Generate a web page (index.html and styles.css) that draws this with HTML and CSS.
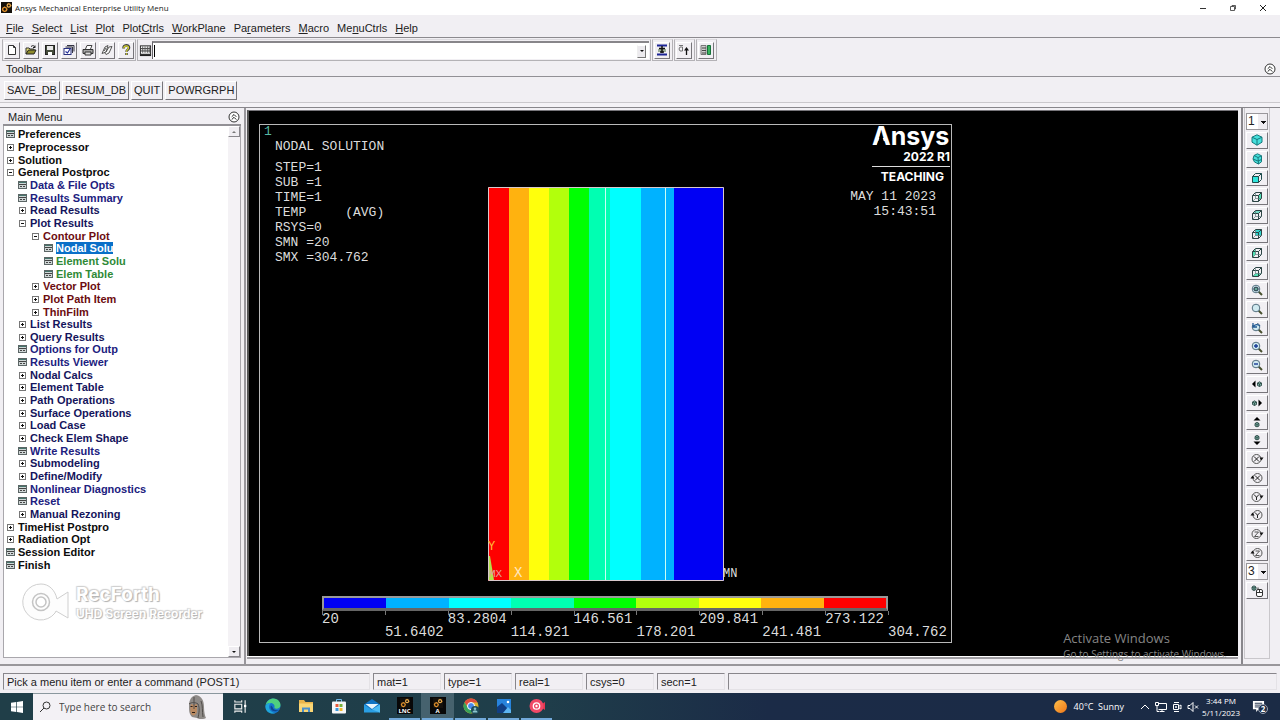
FILE: index.html
```html
<!DOCTYPE html>
<html lang="en">
<head>
<meta charset="utf-8">
<title>Ansys Mechanical Enterprise Utility Menu</title>
<link rel="stylesheet" href="styles.css">
</head>
<body>
<svg class="defs" aria-hidden="true">
  <symbol id="gears" viewBox="0 0 12 12"><rect width="12" height="12" fill="#15110c"/><circle cx="4" cy="8" r="2.2" fill="none" stroke="#e0902c" stroke-width="1.5"/><circle cx="8.5" cy="3.8" r="1.8" fill="none" stroke="#f0b050" stroke-width="1.4"/><path d="M4 5v1M4 10v1M1 8h1M6 8h1M8.500 1v1M10.500 4h1" stroke="#e0902c"/></symbol>
  <symbol id="form" viewBox="0 0 9 8"><rect x=".5" y=".5" width="8" height="7" fill="#cfd6d6" stroke="#5c6666"/><rect x="1" y="1" width="7" height="1" fill="#47756c"/><path d="M1 3.500h7M2 5.500h2M5 5.500h2" stroke="#444"/></symbol>
  <symbol id="plus" viewBox="0 0 9 8"><rect x="1.500" y="1.500" width="6" height="6" fill="#fff" stroke="#777"/><path d="M3 4.500h3M4.500 3v3" stroke="#111"/></symbol>
  <symbol id="minus" viewBox="0 0 9 8"><rect x="1.500" y="1.500" width="6" height="6" fill="#fff" stroke="#777"/><path d="M3 4.500h3" stroke="#111"/></symbol>
  <symbol id="collapse" viewBox="0 0 12 12"><circle cx="6" cy="6" r="5" fill="#fff" stroke="#333"/><path d="M3.700 5.800 6 3.500l2.300 2.300M3.700 8.600 6 6.300l2.300 2.300" fill="none" stroke="#222"/></symbol>
  <symbol id="wire" viewBox="0 0 12 12"><path d="M1.500 4.500h6v6h-6zM1.500 4.500l3-3h6v6l-3 3M7.500 4.500l3-3" fill="none" stroke="#2c4444"/><path d="M4.500 1.500v6h6M4.500 7.500l-3 3" fill="none" stroke="#5d7a78" stroke-width=".7"/></symbol>
  <symbol id="box" viewBox="0 0 12 12"><path d="M1.500 4.500h6v6h-6zM1.500 4.500l3-3h6v6l-3 3M7.500 4.500l3-3" fill="none" stroke="#1d4c4c"/></symbol>
  <symbol id="lens" viewBox="0 0 12 12"><path d="M7.500 7.500 11 11" stroke="#48502e" stroke-width="2"/><circle cx="5" cy="5" r="3.800" fill="#cfe9f0" stroke="#557080"/></symbol>
  <symbol id="rotR" viewBox="0 0 14 12"><circle cx="6.500" cy="6" r="4.500" fill="none" stroke="#555"/><path d="M9.500 4.500h4l-2 3z" fill="#111"/></symbol>
  <symbol id="rotL" viewBox="0 0 14 12"><circle cx="7.500" cy="6" r="4.500" fill="none" stroke="#555"/><path d="M.5 6.500h4l-2-3z" fill="#111"/></symbol>
  <symbol id="dot" viewBox="0 0 6 6"><path d="M1 2l2-1.200L5 2v2.500L3 5.500 1 4.500z" fill="#7fb0a4" stroke="#1d3b38" stroke-width=".8"/><path d="M1 2l2 1 2-1M3 3v2.500" stroke="#1d3b38" stroke-width=".7" fill="none"/></symbol>
</svg>

<header class="titlebar">
  <svg class="app-icon"><use href="#gears"/></svg>
  <h1>Ansys Mechanical Enterprise Utility Menu</h1>
  <div class="window-buttons">
    <button aria-label="Minimize"><svg viewBox="0 0 8 8"><path d="M1 4.500h6" stroke="#333"/></svg></button>
    <button aria-label="Restore"><svg viewBox="0 0 8 8"><path d="M1.500 2.500h4v4h-4zM3 2.500v-1h3.500V5h-1" fill="none" stroke="#333" stroke-width=".8"/></svg></button>
    <button aria-label="Close"><svg viewBox="0 0 8 8"><path d="M1 1l6 6M7 1 1 7" stroke="#222"/></svg></button>
  </div>
</header>

<nav class="menubar">
  <button><u>F</u>ile</button><button><u>S</u>elect</button><button><u>L</u>ist</button><button><u>P</u>lot</button><button>Plot<u>C</u>trls</button><button><u>W</u>orkPlane</button><button>Pa<u>r</u>ameters</button><button><u>M</u>acro</button><button>Me<u>n</u>uCtrls</button><button><u>H</u>elp</button>
</nav>

<div class="tools">
  <div class="group">
    <button class="tool" aria-label="New"><svg viewBox="0 0 12 12"><path d="M2.500 1.500h5l2 2v7h-7zM7.500 1.500v2h2" fill="#fff" stroke="#333"/></svg></button>
    <button class="tool" aria-label="Open"><svg viewBox="0 0 12 12"><path d="M1 10V4h3l1 1h4v2" fill="#e9e37a" stroke="#333"/><path d="M1 10l2.500-4H11l-2 4z" fill="#8d8a2a" stroke="#222"/><path d="M6 2.500c2-1.500 3-1 4 1M10 1.500v2H8" fill="none" stroke="#222"/></svg></button>
    <button class="tool" aria-label="Save"><svg viewBox="0 0 12 12"><rect x="1.500" y="1.500" width="9" height="9" fill="#444b3a" stroke="#222"/><rect x="3" y="2" width="6" height="4" fill="#e8e8e8"/><rect x="4" y="8" width="4" height="3" fill="#fff"/></svg></button>
    <button class="tool" aria-label="Save all"><svg viewBox="0 0 12 12"><path d="M4 1.500h7v6M2.500 3h7v6" fill="#ddd" stroke="#334"/><rect x="1" y="4.500" width="7" height="6" fill="#fff" stroke="#283080"/><path d="M2.500 7.500l2 1.500 2.500-4" fill="none" stroke="#24309a" stroke-width="1.200"/></svg></button>
    <button class="tool" aria-label="Print"><svg viewBox="0 0 12 12"><path d="M3.500 5 5 1.500h5L8.500 5" fill="#fff" stroke="#444"/><path d="M1 5.500h10v4H1z" fill="#a5a5a5" stroke="#333"/><path d="M3 8h6v3H3z" fill="#ddd" stroke="#333"/></svg></button>
    <button class="tool" aria-label="Report"><svg viewBox="0 0 12 12"><path d="M1 9.500 4 3l3-1.500L5 8zM5 8l3-5 3-.5-3 6.500-3 1.500-1.500-2M3 7l2-3" fill="#f6f6f6" stroke="#555"/></svg></button>
    <button class="tool" aria-label="Help"><svg viewBox="0 0 12 12"><path d="M3.500 4.500c0-4 5.500-4 5.500-.8 0 2-2.500 2-2.500 4M6.500 9v2" fill="none" stroke="#444" stroke-width="2.600"/><path d="M3.800 4.200c0-3 4.700-3 4.700-.5 0 2-2 2-2 4M6.500 9.300v1.500" fill="none" stroke="#d8d62c" stroke-width="1.200"/></svg></button>
  </div>
  <div class="group command">
    <svg class="keyboard" viewBox="0 0 14 13"><rect x="1.500" y="1.500" width="11" height="9" fill="#fff" stroke="#222"/><path d="M2 4.500h10M2 7h10" stroke="#222"/><path d="M4 2v7M6.500 2v7M9 2v7M11 2v7" stroke="#555"/><path d="M1 11.500h12" stroke="#222" stroke-width="2"/></svg>
    <div class="field"><span class="caret"></span><input type="text" aria-label="Command prompt"><button aria-label="Command history"><i class="arrow"></i></button></div>
  </div>
  <div class="group single"><button class="tool" aria-label="Raise hidden"><svg viewBox="0 0 12 12"><path d="M1 1.500h10M1 10.500h10" stroke="#1c2596" stroke-width="2"/><path d="M2 5h8v3H2z" fill="#9cae9a"/><path d="M3 4.500h6M6 2v7M4 8h4" stroke="#111" stroke-width="1.500"/></svg></button></div>
  <div class="group single"><button class="tool" aria-label="Reset picking"><svg viewBox="0 0 12 12"><path d="M1 1.500h4M2 3h2.500v4H2L1 5z" fill="none" stroke="#555" stroke-width=".8"/><path d="M8.500 5v6" stroke="#111" stroke-width="1.300"/><path d="M6 6.500 8.500 3 11 6.500z" fill="#111"/></svg></button></div>
  <div class="group single"><button class="tool" aria-label="Contact manager"><svg viewBox="0 0 12 12"><path d="M1 1.500h5v9H1z" fill="#cfcfcf" stroke="#777"/><path d="M2 4h4M2 6.500h4M2 9h4" stroke="#444"/><path d="M7.500 1.500h3v9h-3z" fill="#37b45c" stroke="#17713a"/></svg></button></div>
</div>

<div class="panel-title toolbar-title"><h2>Toolbar</h2><button aria-label="Collapse toolbar"><svg><use href="#collapse"/></svg></button></div>
<div class="macros"><button>SAVE_DB</button><button>RESUM_DB</button><button>QUIT</button><button>POWRGRPH</button></div>

<main>
  <aside>
    <div class="panel-title"><h2>Main Menu</h2><button aria-label="Collapse main menu"><svg><use href="#collapse"/></svg></button></div>
    <div class="tree-box">
      <div class="tree-body">
      <ul class="tree">
        <li><svg><use href="#form"/></svg>Preferences</li>
        <li><svg><use href="#plus"/></svg>Preprocessor</li>
        <li><svg><use href="#plus"/></svg>Solution</li>
        <li><svg><use href="#minus"/></svg>General Postproc</li>
        <li class="l1 leaf"><svg><use href="#form"/></svg>Data &amp; File Opts</li>
        <li class="l1 leaf"><svg><use href="#form"/></svg>Results Summary</li>
        <li class="l1"><svg><use href="#plus"/></svg>Read Results</li>
        <li class="l1"><svg><use href="#minus"/></svg>Plot Results</li>
        <li class="l2"><svg><use href="#minus"/></svg>Contour Plot</li>
        <li class="l3"><svg><use href="#form"/></svg><mark>Nodal Solu</mark></li>
        <li class="l3"><svg><use href="#form"/></svg>Element Solu</li>
        <li class="l3"><svg><use href="#form"/></svg>Elem Table</li>
        <li class="l2"><svg><use href="#plus"/></svg>Vector Plot</li>
        <li class="l2"><svg><use href="#plus"/></svg>Plot Path Item</li>
        <li class="l2"><svg><use href="#plus"/></svg>ThinFilm</li>
        <li class="l1"><svg><use href="#plus"/></svg>List Results</li>
        <li class="l1"><svg><use href="#plus"/></svg>Query Results</li>
        <li class="l1 leaf"><svg><use href="#form"/></svg>Options for Outp</li>
        <li class="l1 leaf"><svg><use href="#form"/></svg>Results Viewer</li>
        <li class="l1"><svg><use href="#plus"/></svg>Nodal Calcs</li>
        <li class="l1"><svg><use href="#plus"/></svg>Element Table</li>
        <li class="l1"><svg><use href="#plus"/></svg>Path Operations</li>
        <li class="l1"><svg><use href="#plus"/></svg>Surface Operations</li>
        <li class="l1"><svg><use href="#plus"/></svg>Load Case</li>
        <li class="l1"><svg><use href="#plus"/></svg>Check Elem Shape</li>
        <li class="l1 leaf"><svg><use href="#form"/></svg>Write Results</li>
        <li class="l1"><svg><use href="#plus"/></svg>Submodeling</li>
        <li class="l1"><svg><use href="#plus"/></svg>Define/Modify</li>
        <li class="l1 leaf"><svg><use href="#form"/></svg>Nonlinear Diagnostics</li>
        <li class="l1 leaf"><svg><use href="#form"/></svg>Reset</li>
        <li class="l1"><svg><use href="#plus"/></svg>Manual Rezoning</li>
        <li><svg><use href="#plus"/></svg>TimeHist Postpro</li>
        <li><svg><use href="#plus"/></svg>Radiation Opt</li>
        <li><svg><use href="#form"/></svg>Session Editor</li>
        <li><svg><use href="#form"/></svg>Finish</li>
      </ul>
      <div class="recorder">
        <svg viewBox="0 0 48 40"><path d="M19 1a18 18 0 1 0 14 29l1-2 12 7V9l-11 7C33 7 27 1 19 1z" fill="#fdfdfd" stroke="#cfcfcf"/><circle cx="19" cy="19" r="8.500" fill="none" stroke="#c4c4c4" stroke-width="1.500"/><circle cx="19" cy="19" r="5" fill="#fff" stroke="#c4c4c4" stroke-width="1.500"/></svg>
        <div><strong>RecForth</strong><span>UHD Screen Recorder</span></div>
      </div>
      </div>
      <div class="scroll"><button aria-label="Scroll up"><i class="arrow up"></i></button><button aria-label="Scroll down"><i class="arrow"></i></button></div>
    </div>
  </aside>

  <section class="graphics">
    <div class="frame">
      <div class="notes">
        <p class="win">1</p>
        <p class="heading">NODAL SOLUTION</p>
        <pre>STEP=1
SUB =1
TIME=1
TEMP     (AVG)
RSYS=0
SMN =20
SMX =304.762</pre>
      </div>
      <svg class="contour" width="256" height="395" viewBox="0 0 256 395">
        <path fill="#f00" d="M0 0h21v394H0z"/><path fill="#ffb20f" d="M21 0h20v394H21z"/><path fill="#ffff0c" d="M41 0h20v394H41z"/><path fill="#b2ff0c" d="M61 0h20v394H61z"/><path fill="#00ff02" d="M81 0h20v394H81z"/><path fill="#00ffb2" d="M101 0h21v394h-21z"/><path fill="#0ff" d="M122 0h31v394h-31z"/><path fill="#00b2ff" d="M153 0h33v394h-33z"/><path fill="#0000f4" d="M186 0h50v394h-50z"/>
        <path d="M117.500 0v394M177.500 0v394" stroke="#c8fff4"/>
        <path d="M.5 .5h235v393H.5z" fill="none" stroke="#d8c8cc"/>
        <path d="M1 369l1 0 4 24H1z" fill="#b4e04a"/>
        <text x="0" y="363" class="y-axis">Y</text><text x="1" y="390" class="mx">MX</text><text x="26" y="390" class="x-axis">X</text><text x="235" y="390" class="mn">MN</text>
      </svg>
      <div class="stamp">
        <svg width="78" height="24" viewBox="0 0 78 24" role="img" aria-label="Ansys"><text x="0" y="20" class="logo">Ansys</text><path d="M5 20.500 9 7.500l4.200 13z" fill="#000"/></svg>
        <strong>2022 R1</strong>
        <strong class="edition">TEACHING</strong>
        <p>MAY 11 2023</p><p>15:43:51</p>
      </div>
      <div class="legend">
        <div class="bar"><i class="c1"></i><i class="c2"></i><i class="c3"></i><i class="c4"></i><i class="c5"></i><i class="c6"></i><i class="c7"></i><i class="c8"></i><i class="c9"></i></div>
        <span>20</span><span>51.6402</span><span>83.2804</span><span>114.921</span><span>146.561</span><span>178.201</span><span>209.841</span><span>241.481</span><span>273.122</span><span>304.762</span>
      </div>
    </div>
    <div class="activate"><p>Activate Windows</p><p class="sub">Go to Settings to activate Windows.</p></div>
  </section>

  <div class="views">
    <div class="view-list">
      <select aria-label="Window"><option>1</option></select>
      <button aria-label="Isometric view"><svg viewBox="0 0 12 12"><path d="M6 .8 11 3.200v5L6 11.200 1 8.200v-5z" fill="#45e0dc" stroke="#17797c"/><path d="M1 3.200 6 5.500l5-2.300M6 5.500v5.700" fill="none" stroke="#17797c"/></svg></button>
      <button aria-label="Oblique view"><svg viewBox="0 0 12 12"><path d="M3 2.500 6.500 .8l4 2v6L7.500 11l-4-2L2 6z" fill="#45e0dc" stroke="#17797c"/><path d="M3 2.500 7 4.500l3.500-1.700M7 4.500l.5 6.500M2 6l5 2 3.500-1.500" fill="none" stroke="#17797c"/></svg></button>
      <button aria-label="Front view"><svg viewBox="0 0 12 12"><path d="M1.500 4.500h6v6h-6z" fill="#30e5dc"/><use href="#box"/></svg></button>
      <button aria-label="Right view"><svg viewBox="0 0 12 12"><path d="M7.500 4.500l3-3v6l-3 3z" fill="#52e0b4"/><use href="#wire"/></svg></button>
      <button aria-label="Top view"><svg viewBox="0 0 12 12"><path d="M1.500 4.500l3-3h6l-3 3z" fill="#76dcc8"/><use href="#wire"/></svg></button>
      <button aria-label="Back view"><svg viewBox="0 0 12 12"><path d="M4.500 1.500h6v6h-6z" fill="#30d5cc"/><use href="#wire"/></svg></button>
      <button aria-label="Left view"><svg viewBox="0 0 12 12"><path d="M1.500 4.500l3-3v6l-3 3z" fill="#52e0b4"/><use href="#wire"/></svg></button>
      <button aria-label="Bottom view"><svg viewBox="0 0 12 12"><path d="M1.500 10.500l3-3h6l-3 3z" fill="#52e0b4"/><use href="#wire"/></svg></button>
      <button aria-label="Fit view"><svg viewBox="0 0 12 12"><use href="#lens"/><path d="M3 4l2-1 2 1v2L5 7 3 6z" fill="#68a89a" stroke="#234"/></svg></button>
      <button aria-label="Zoom model"><svg viewBox="0 0 12 12"><use href="#lens"/></svg></button>
      <button aria-label="Back up"><svg viewBox="0 0 12 12"><use href="#lens"/><path d="M0 0h6v3H0z" fill="#f3f1f4"/><path d="M2 1v4h4M2 5c2-3 5-3 7-1" fill="none" stroke="#225a94" stroke-width="1.300"/></svg></button>
      <button aria-label="Zoom in"><svg viewBox="0 0 12 12"><use href="#lens"/><path d="M3 5h4M5 3v4" stroke="#173a96" stroke-width="1.400"/></svg></button>
      <button aria-label="Zoom out"><svg viewBox="0 0 12 12"><use href="#lens"/><path d="M3 5h4" stroke="#173a96" stroke-width="1.400"/></svg></button>
      <button aria-label="Pan left"><svg viewBox="0 0 12 12"><path d="M4.500 2.500v7L1 6z"/><use href="#dot" x="5.500" y="3" width="6" height="6"/></svg></button>
      <button aria-label="Pan right"><svg viewBox="0 0 12 12"><path d="M7.500 2.500v7L11 6z"/><use href="#dot" x=".5" y="3" width="6" height="6"/></svg></button>
      <button aria-label="Pan up"><svg viewBox="0 0 12 12"><path d="M2.500 4.500h7L6 1z"/><use href="#dot" x="3" y="5.500" width="6" height="6"/></svg></button>
      <button aria-label="Pan down"><svg viewBox="0 0 12 12"><path d="M2.500 7.500h7L6 11z"/><use href="#dot" x="3" y=".5" width="6" height="6"/></svg></button>
      <button aria-label="Rotate plus X"><svg viewBox="0 0 14 12"><use href="#rotR"/><path d="M4 3.500l5 5M9 3.500l-5 5" stroke="#222"/></svg></button>
      <button aria-label="Rotate minus X"><svg viewBox="0 0 14 12"><use href="#rotL"/><path d="M5 3.500l5 5M10 3.500l-5 5" stroke="#222"/></svg></button>
      <button aria-label="Rotate plus Y"><svg viewBox="0 0 14 12"><use href="#rotR"/><path d="M4 3.500 6.500 6.200 9 3.500M6.500 6v3" fill="none" stroke="#222"/></svg></button>
      <button aria-label="Rotate minus Y"><svg viewBox="0 0 14 12"><use href="#rotL"/><path d="M5 3.500 7.500 6.200 10 3.500M7.500 6v3" fill="none" stroke="#222"/></svg></button>
      <button aria-label="Rotate plus Z"><svg viewBox="0 0 14 12"><use href="#rotR"/><path d="M4.500 4h4l-4 4.500h4" fill="none" stroke="#555"/></svg></button>
      <button aria-label="Rotate minus Z"><svg viewBox="0 0 14 12"><use href="#rotL"/><path d="M5.500 4h4l-4 4.500h4" fill="none" stroke="#555"/></svg></button>
      <select aria-label="Rate"><option>3</option></select>
      <button aria-label="Dynamic model mode"><svg viewBox="0 0 12 12"><use href="#dot" x="0" y="0" width="6" height="6"/><rect x="5.500" y="4.500" width="6" height="7" rx="1.500" fill="#fff" stroke="#333"/><path d="M5.500 7.500h6M8.500 4.500v3M7 4.500V2.500" stroke="#333" fill="none"/></svg></button>
    </div>
  </div>
</main>

<footer class="status"><span class="prompt">Pick a menu item or enter a command (POST1)</span><span>mat=1</span><span>type=1</span><span>real=1</span><span>csys=0</span><span>secn=1</span><span class="rest"></span></footer>

<div class="taskbar">
  <button class="start" aria-label="Start"><svg viewBox="0 0 12 12"><path d="M0 1.700 5.300 1v4.700H0zM6 .9 12 0v5.700H6zM0 6.300h5.300V11L0 10.300zM6 6.300h6V12l-6-.9z" fill="#fff"/></svg></button>
  <label class="search"><svg viewBox="0 0 12 12"><circle cx="7.500" cy="4.500" r="3.500" fill="none" stroke="#333"/><path d="M5 7 1 11" stroke="#333"/></svg><input type="text" placeholder="Type here to search" aria-label="Search"><svg class="helmet" viewBox="0 0 20 24"><path d="M3 11C3 4 6 1 10 0c6 1 8 6 8 12 0 5 1 9 2 11-4 2-8 1-9 0l-5-1c-3-3-3-7-3-11z" fill="#8f8b88"/><path d="M5 9c2 1 4 1 6 0v8c-1 3-3 4-5 3-2-2-2-6-1-11z" fill="#b98a62"/><path d="M3 9c3-2 6-2 9 0M8 2v12M12 9c2 4 1 9 0 14M15 6c2 5 1 10 2 16" fill="none" stroke="#514d4a"/><path d="M4.500 11.500h2M9 11.500h2M6 17.500h3" stroke="#2c1d15"/></svg></label>
  <div class="apps">
    <button aria-label="Task view"><svg viewBox="0 0 14 14"><path d="M2.500 5.500h6v4h-6zM2.500 2v1.500h6V2M2.500 13v-1.500h6V13M11.500 2v11" fill="none" stroke="#eee"/><path d="M10.500 6h2v2h-2z" fill="#fff"/></svg></button>
    <button aria-label="Edge"><svg viewBox="0 0 16 16"><circle cx="8" cy="8" r="7.500" fill="#1673c9"/><path d="M.5 7.500C1.500 3 5 .5 8.500 .5 13 .6 15.500 4 15.500 7c0 2.500-2 3.700-4 3.700-1.600 0-2.500-.7-2-1.700C10 7 8 5 5.500 5 3 5 1 6 .5 7.500z" fill="#4fd07f"/><path d="M.5 7.500C2 5.300 4 4.600 6 5c-2 1.500-2.500 4-1.500 6 1 2.500 3.500 4 6 3.900C6 17-.5 14 .5 7.500z" fill="#1fa5dc"/><path d="M6 7.500c-1.500 3 1 6 4.500 5.700 2 0 3-.7 3.500-1.200-2 .6-6 .5-6.500-3z" fill="#0c4790"/></svg></button>
    <button aria-label="File Explorer"><svg viewBox="0 0 16 16"><path d="M1 2h5l1.500 2H15v10H1z" fill="#e9b44c"/><path d="M1 5.500h14V14H1z" fill="#fad675"/><path d="M4 14v-4.500h8V14h-2v-2.500H6V14z" fill="#4a8fcb"/></svg></button>
    <button aria-label="Microsoft Store"><svg viewBox="0 0 16 16"><path d="M5.500 4V1.500h5V4" fill="none" stroke="#6fb8e8"/><rect x="1" y="3.500" width="14" height="12" rx="1" fill="#f4f6f8"/><path d="M4.500 6h3v3h-3z" fill="#e85a3a"/><path d="M8.500 6h3v3h-3z" fill="#76b33c"/><path d="M4.500 10h3v3h-3z" fill="#3a98dc"/><path d="M8.500 10h3v3h-3z" fill="#f0b82c"/></svg></button>
    <button aria-label="Mail"><svg viewBox="0 0 16 16"><path d="M0 6.500 8 1l8 5.500V14H0z" fill="#1274c4"/><path d="M1.500 6h13L8 11z" fill="#e8f5fc"/><path d="M0 6.500 8 12l8-5.500V14.500H0z" fill="#2a9fe4"/><path d="M16 6.500V14.500L8 11.500z" fill="#4ebcf4"/></svg></button>
    <button class="running ansys"><svg><use href="#gears"/></svg>LNC</button>
    <button class="running ansys active"><svg><use href="#gears"/></svg>A</button>
    <button class="running" aria-label="Chrome"><svg viewBox="0 0 16 16"><circle cx="8" cy="8" r="7.500" fill="#ddb52e"/><path d="M1.500 4.200A7.500 7.500 0 0 1 14.500 4.500H8L5 9z" fill="#dd4c3f"/><path d="M1.500 4.200C-1 8.500 1.500 15 8 15.500l3-5.500H5z" fill="#38a15a"/><circle cx="8" cy="8" r="3.500" fill="#4689ed" stroke="#fff"/><circle cx="12" cy="12" r="4" fill="#1d4c5a"/><circle cx="12" cy="10.800" r="1.300" fill="#8cc4cc"/><path d="M9.500 14.500c0-3 5-3 5 0" fill="#8cc4cc"/></svg></button>
    <button class="running" aria-label="Photos"><svg viewBox="0 0 16 16"><path d="M1 1h14v14H1z" fill="#2783dc"/><path d="M1 15V9l5-4 9 9v1z" fill="#103e84"/><path d="M7 15l5-6 3 3v3z" fill="#5cb5f2"/><circle cx="12" cy="4" r="1.300" fill="#fff"/></svg></button>
    <button class="running" aria-label="Recorder"><svg viewBox="0 0 16 16"><path d="M10 8l6-4v8z" fill="#e43650"/><circle cx="7.500" cy="8" r="7" fill="#f04866"/><circle cx="7.500" cy="8" r="3.200" fill="none" stroke="#fff" stroke-width="1.300"/><circle cx="7.500" cy="8" r="1.200" fill="#fff"/></svg></button>
  </div>
  <div class="tray">
    <span class="weather"><i></i>40°C&nbsp; Sunny</span>
    <span class="tray-icons">
      <svg viewBox="0 0 12 12"><path d="M2 8l4-4 4 4" fill="none" stroke="#fff"/></svg>
      <svg viewBox="0 0 12 12"><path d="M3.500 2.500h8v6h-8M7 8.500v2M4.500 10.500h5M.5 1.500h3v3h-3zM2 4.500v6h2" fill="none" stroke="#fff"/></svg>
      <svg viewBox="0 0 12 12"><path d="M3 1.500h5M3 10.500h5M2.500 3.500h5v5h-5zM7.500 5.500l2.500-1.500v4L7.500 6.500" fill="none" stroke="#fff"/><circle cx="5" cy="6" r="1" fill="#fff"/></svg>
      <svg viewBox="0 0 12 12"><path d="M1 4.500h2l3-3v9l-3-3H1zM8 4.500l3 3M11 4.500l-3 3" fill="none" stroke="#fff"/></svg>
    </span>
    <time>3:44 PM<br>5/11/2023</time>
    <button class="notice" aria-label="2 notifications"><svg viewBox="0 0 14 14"><path d="M1 1h12v9H7l-2.500 3v-3H1z" fill="#fff"/><path d="M3 3.500h8M3 5.500h8M3 7.500h8" stroke="#1b2b45"/></svg><b>2</b></button>
  </div>
</div>
</body>
</html>
```
FILE: styles.css
```css
* { box-sizing: border-box; }
body { margin: 0; min-height: 100vh; display: flex; flex-direction: column; background: #f1eff3; color: #222; font: 11px/13px "Liberation Sans", Arial, sans-serif; }
button, input, select { font: inherit; color: inherit; }
button { padding: 0; border: 0; background: none; }
h1, h2, p, pre, ul { margin: 0; padding: 0; font-weight: normal; }
h2 { font-size: 11px; }
svg { display: block; flex: none; }
.defs { position: absolute; width: 0; height: 0; }

.titlebar { display: flex; align-items: center; gap: 3px; height: 15px; padding-left: 1px; background: #fff; }
.titlebar h1 { font: 8px/12px "Open Sans", sans-serif; }
.app-icon { width: 11px; height: 11px; }
.window-buttons { display: flex; gap: 22px; margin-left: auto; padding-right: 13px; }
.window-buttons svg { width: 8px; height: 8px; }

.menubar { display: flex; gap: 8px; height: 23px; padding: 4px 6px 0; border-bottom: 1px solid #8c8a8e; }
.menubar button { height: 18px; }
.menubar u { text-underline-offset: 1px; }

.tools { display: flex; height: 24px; padding: 1px 2px; gap: 1px; }
.group { display: flex; align-items: center; gap: 3px; height: 22px; padding: 0 1px; border: 1px solid #b4b2b6; border-top-color: #dcdade; }
.tool { display: grid; place-items: center; width: 16px; height: 17px; border: 1px solid; border-color: #fff #77757a #77757a #fff; }
.tool svg { width: 12px; height: 12px; }
.command { flex: 0 1 514px; gap: 0; }
.keyboard { width: 13px; height: 13px; }
.field { display: flex; align-items: center; flex: 1; height: 18px; padding-left: 1px; background: #fff; border-top: 2px solid #88868a; border-left: 1px solid #66646a; }
.field input { flex: 1; min-width: 0; height: 14px; padding: 0 2px; border: 0; background: none; outline: 0; }
.field button { width: 9px; height: 13px; display: grid; place-items: center; margin-right: 3px; background: #eceaee; border: 1px solid; border-color: #fff #777 #777 #eee; }
.caret { width: 1px; height: 12px; background: #000; }
.arrow { width: 0; height: 0; border: 2px solid transparent; border-top-color: #111; border-bottom: 0; }
.arrow.up { border-top: 0; border-bottom: 2px solid #777; }
.single { width: 21px; }

.panel-title { display: flex; align-items: center; justify-content: space-between; height: 16px; padding: 0 1px 0 5px; border-bottom: 2px solid #929095; }
.panel-title svg { width: 12px; height: 12px; }
.toolbar-title { height: 15px; padding: 0 4px 0 6px; border-bottom-width: 1px; }
.macros { display: flex; gap: 2px; height: 31px; padding: 4px 4px 0; border-bottom: 1px solid #88868b; box-shadow: inset 0 -4px #f4f2f6, inset 0 -5px #cac8cc; }
.macros button { height: 19px; padding: 0 2px; border: 1px solid; border-color: #fff #77757a #77757a #fff; }

main { flex: 1; display: flex; border-bottom: 2px solid #99979b; }
aside { flex: 0 0 246px; display: flex; flex-direction: column; padding: 2px 3px 6px 3px; border-right: 2px solid #99979c; }
.tree-box { flex: 1; display: flex; background: #fff; border: 1px solid #a9a7ac; border-top: 0; }
.tree-body { flex: 1; min-width: 0; }
.tree { display: grid; grid-auto-rows: 1fr; height: 445px; padding: 2px 0 0 2px; list-style: none; font-weight: bold; color: #0c0c0c; }
.tree li { display: flex; align-items: center; gap: 3px; line-height: 12px; white-space: nowrap; }
.tree svg { width: 9px; height: 8px; }
.tree .l1 { padding-left: 12px; color: #14145c; }
.tree .leaf { color: #20207e; }
.tree .l2 { padding-left: 25px; color: #6c0c10; }
.tree .l3 { padding-left: 38px; color: #2f8a37; }
.tree mark { color: #fff; background: #0a70c8; }
.recorder { display: flex; gap: 6px; padding: 12px 0 0 18px; color: #fff; font-family: Inter, sans-serif; text-shadow: 1px 1px 1px #b0b0b0, -1px -1px 1px #d0d0d0, 1px -1px 1px #d8d8d8; }
.recorder svg { width: 48px; height: 40px; }
.recorder strong { display: block; font-size: 19px; line-height: 24px; }
.recorder span { font-size: 12px; line-height: 14px; white-space: nowrap; font-weight: 600; }
.scroll { flex: 0 0 12px; display: flex; flex-direction: column; justify-content: space-between; background: #f4f2f5; }
.scroll button { display: grid; place-items: center; height: 11px; background: #efedf1; border: 1px solid; border-color: #fff #88868b #88868b #fff; }

.graphics { position: relative; flex: 1; min-width: 0; margin: 2px 3px 8px 1px; padding: 13px 3px 13px 10px; background: #000; border-top: 1px solid #77757a; border-left: 2px solid #555; box-shadow: 0 1px #fff, 0 3px #a09ea3; color: #dcdcdc; }
.frame { display: grid; grid-template-columns: 33% 37% 1fr; grid-template-rows: 1fr auto; width: 71%; height: 100%; border: 1px solid #b9b9b9; font: 13px/15px "Liberation Mono", "Courier New", monospace; }
.notes { padding-left: 15px; }
.notes .win { margin-left: -11px; color: #57b8a4; line-height: 14px; }
.notes .heading { margin-bottom: 6px; }
.notes pre { font: inherit; }
.contour { margin-top: 62px; font-size: 12px; overflow: visible; }
.contour .y-axis { fill: #ffbc3c; }
.contour .mx { fill: #e4a09a; font-size: 11px; }
.contour .x-axis { fill: #ffe8c0; font-size: 14px; }
.contour .mn { fill: #ddd; }
.stamp { display: flex; flex-direction: column; align-items: flex-end; padding-right: 1px; }
.stamp svg { overflow: visible; }
.stamp .logo { fill: #fff; font: bold 25px Inter, sans-serif; }
.stamp strong { width: 78px; color: #fff; font: bold 12px/15px Inter, sans-serif; text-align: right; }
.stamp .edition { margin-top: 2px; padding: 2px 6px 5px 0; border-top: 1px solid #ddd; }
.stamp p { padding-right: 14px; }
.legend { grid-column: 1 / -1; display: grid; grid-template-columns: repeat(10, 1fr); grid-template-rows: 15px 1fr; margin-left: 62px; height: 46px; font-size: 14px; }
.legend .bar { grid-column: 1 / 10; display: flex; border: 2px solid #999; border-bottom: 3px solid #666; }
.legend span { grid-row: 2; line-height: 13px; padding-top: 2px; white-space: nowrap; background: linear-gradient(#777, #777) 0 0 / 1px 4px no-repeat; }
.legend span:nth-of-type(even) { padding-top: 15px; }
.bar i { flex: 1; }
.c1 { background: #0000f4; } .c2 { background: #00b2ff; } .c3 { background: #0ff; }
.c4 { background: #00ffb2; } .c5 { background: #00ff02; } .c6 { background: #b2ff0c; }
.c7 { background: #ffff0c; } .c8 { background: #ffb20f; } .c9 { background: #f00; }
.activate { position: absolute; right: 11px; bottom: -5px; color: #858585; font: 13px/17px "Open Sans", sans-serif; }
.activate .sub { font-size: 10px; line-height: 14px; }

.views { flex: 0 0 39px; padding-left: 1px; border-left: 2px solid #88868b; }
.view-list { display: grid; grid-auto-rows: 1fr; row-gap: 2px; width: 26px; height: 551px; padding: 5px 1px 59px; border: 1px solid #c9c7cb; border-top: 0; }
.view-list button { display: grid; place-items: center; width: 22px; min-height: 0; border: 1px solid; border-color: #fff #77757a #77757a #fff; }
.view-list svg { width: 12px; height: 12px; }
.view-list svg[viewBox="0 0 14 12"] { width: 14px; }
.view-list select { width: 22px; height: 17px; padding: 0 0 0 1px; border: 1px solid #99979b; border-radius: 0; appearance: none; background: linear-gradient(#111, #111) 14px 7px / 5px 1px no-repeat, linear-gradient(#111, #111) 15px 8px / 3px 1px no-repeat, linear-gradient(#111, #111) 16px 9px / 1px 1px no-repeat, linear-gradient(#efedf1, #efedf1) 11px 0 / 10px 15px no-repeat, #fff; font-size: 12px; }

.status { display: flex; gap: 3px; padding: 7px 3px 2px; height: 26px; }
.status span { flex: 0 0 68px; height: 17px; padding: 2px 3px; border: 1px solid; border-color: #88868b #e4e2e6 #e4e2e6 #88868b; white-space: nowrap; }
.status .prompt { flex-basis: 367px; }
.status .rest { flex: 1; }

.taskbar { display: flex; height: 27px; margin-top: 1px; background: linear-gradient(90deg, #203e48, #1f3e4a 42%, #1b2b47 60%, #1b2b45); color: #fff; font: 10px/12px "Open Sans", sans-serif; }
.start { width: 33px; display: grid; place-items: center; }
.start svg { width: 12px; height: 12px; }
.search { flex: 0 0 190px; min-width: 0; display: flex; align-items: center; gap: 8px; padding: 0 17px 0 6px; background: #f3f1f5; border-top: 1px solid #8b989e; }
.search svg { width: 12px; height: 12px; }
.search .helmet { width: 20px; height: 24px; }
.search input { flex: 1; width: 0; min-width: 0; padding: 0; border: 0; background: none; }
.search input::placeholder { color: #444; opacity: 1; }
.apps { display: flex; }
.apps button { width: 33px; display: grid; place-items: center; border-bottom: 2px solid transparent; }
.apps svg { width: 16px; height: 16px; }
.apps .running { border-image: linear-gradient(90deg, transparent 10%, #72a9da 10% 90%, transparent 90%) 2; border-width: 0 0 2px; border-style: solid; }
.apps .ansys { align-content: center; justify-content: center; color: #fff; font: bold 6px/6px "Open Sans", sans-serif; background: linear-gradient(#080808, #080808) center / 16px 17px no-repeat; }
.apps .ansys svg { width: 10px; height: 10px; margin: auto; }
.apps .active { background-color: #46626e; }
.tray { display: flex; align-items: center; margin-left: auto; padding-right: 13px; font-size: 9px; }
.weather { display: flex; align-items: center; gap: 7px; margin-right: 15px; }
.weather i { width: 13px; height: 13px; border-radius: 50%; background: linear-gradient(135deg, #ffc04a, #ee7518); }
.tray-icons { display: flex; gap: 4px; margin-right: 3px; }
.tray-icons svg { width: 12px; height: 12px; }
.tray time { font-size: 8px; text-align: center; }
.notice { position: relative; width: 15px; height: 15px; margin-left: 12px; }
.notice svg { width: 13px; height: 13px; }
.notice b { position: absolute; left: 6px; top: 5px; width: 10px; height: 10px; border: 1px solid #99a2b2; border-radius: 50%; background: #1b2b45; font-size: 8px; line-height: 8px; }
```
